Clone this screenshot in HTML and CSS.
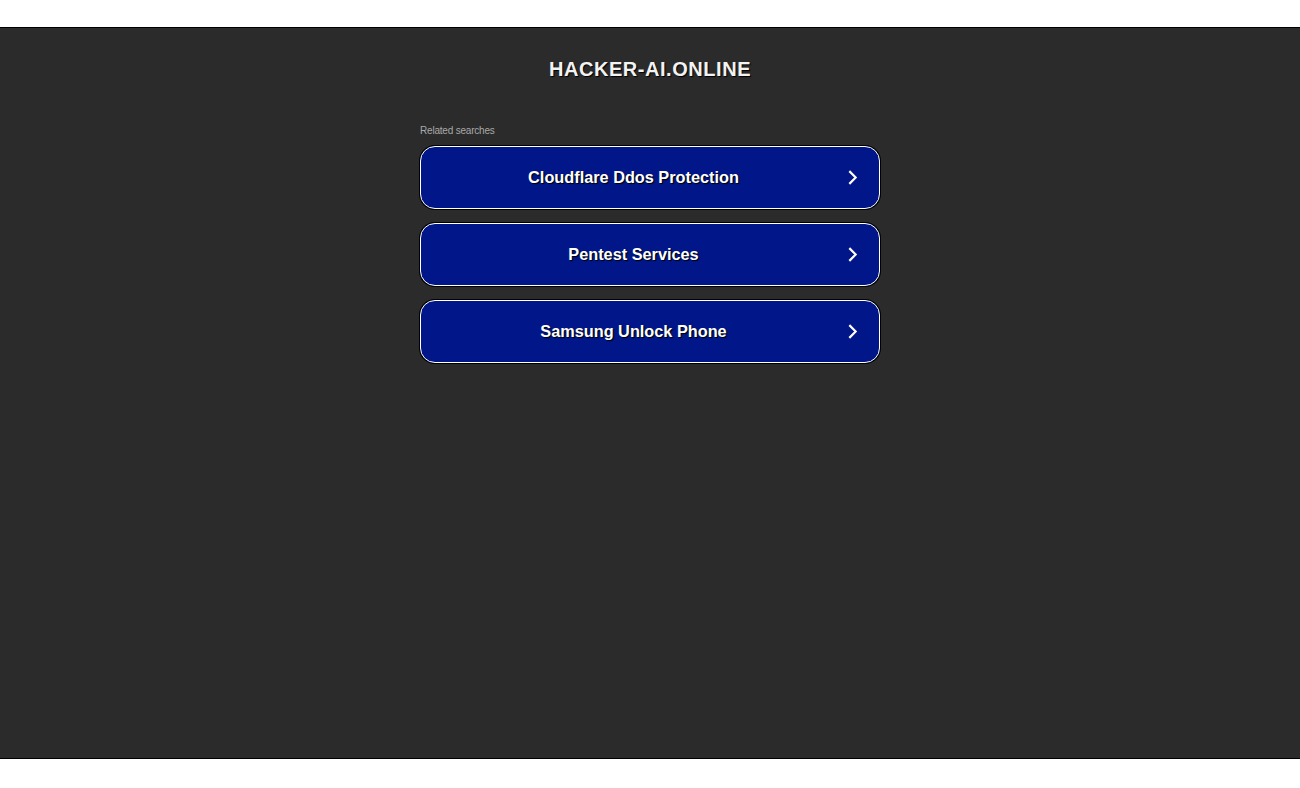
FILE: index.html
```html
<!DOCTYPE html>
<html>
<head>
<meta charset="utf-8">
<link rel="stylesheet" href="styles.css">
</head>
<body>
<div class="page">
  <div class="header">HACKER-AI.ONLINE</div>
  <div class="content">
    <div class="label">Related searches</div>
    <div class="list">
      <a class="item" href="#"><span class="text">Cloudflare Ddos Protection</span><svg class="chev" viewBox="0 0 12 16" width="12" height="16"><path d="M3 2 L9 8 L3 14" fill="none" stroke="#fff" stroke-width="2"/></svg></a>
      <a class="item" href="#"><span class="text">Pentest Services</span><svg class="chev" viewBox="0 0 12 16" width="12" height="16"><path d="M3 2 L9 8 L3 14" fill="none" stroke="#fff" stroke-width="2"/></svg></a>
      <a class="item" href="#"><span class="text">Samsung Unlock Phone</span><svg class="chev" viewBox="0 0 12 16" width="12" height="16"><path d="M3 2 L9 8 L3 14" fill="none" stroke="#fff" stroke-width="2"/></svg></a>
    </div>
  </div>
</div>
</body>
</html>
```
FILE: styles.css
```css
html, body { margin: 0; padding: 0; background: #fff; }
body { padding-top: 27px; font-family: "Liberation Sans", Arial, sans-serif; }
.page {
  background: #2b2b2b;
  border-top: 1px solid #000;
  border-bottom: 1px solid #000;
  height: 730px;
  display: flex;
  flex-direction: column;
  align-items: center;
}
.header {
  margin-top: 30px;
  font-size: 20px;
  font-weight: bold;
  letter-spacing: 0.55px;
  color: #f3f3f3;
  text-shadow: 1px 1px 1px #000;
  line-height: 22px;
}
.content { width: 460px; margin-top: 45px; }
.label { font-size: 10px; color: #a9a9a9; line-height: 12px; letter-spacing: -0.2px; }
.list { margin-top: 9px; display: flex; flex-direction: column; gap: 14px; }
.item {
  box-sizing: border-box;
  height: 63px;
  border: 1px solid #fff;
  border-radius: 15px;
  background: #011689;
  box-shadow: 0 0 0 1px #000;
  display: flex;
  align-items: center;
  text-decoration: none;
  padding: 0 20px;
}
.text {
  flex: 1;
  text-align: center;
  color: #fff;
  font-size: 16.3px;
  font-weight: bold;
  text-shadow: 1px 1px 1px #000;
  padding-right: 20px;
}
.chev { flex: none; width: 13px; height: 17px; }
```
